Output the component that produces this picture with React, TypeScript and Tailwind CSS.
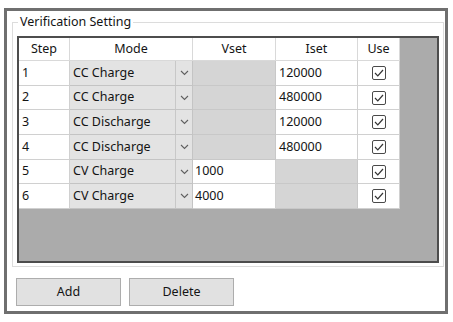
import React from 'react';

type Row = {
  step: number;
  mode: string;
  vset: string | null;
  iset: string | null;
};

const rows: Row[] = [
  { step: 1, mode: 'CC Charge', vset: null, iset: '120000' },
  { step: 2, mode: 'CC Charge', vset: null, iset: '480000' },
  { step: 3, mode: 'CC Discharge', vset: null, iset: '120000' },
  { step: 4, mode: 'CC Discharge', vset: null, iset: '480000' },
  { step: 5, mode: 'CV Charge', vset: '1000', iset: null },
  { step: 6, mode: 'CV Charge', vset: '4000', iset: null },
];

const rowHeights = ['h-[25px]', 'h-[24px]', 'h-[25px]', 'h-[25px]', 'h-[24px]', 'h-[25px]'];

function Chevron() {
  return (
    <svg width="9" height="6" viewBox="0 0 9 6" fill="none">
      <path d="M1 1l3.5 3.5L8 1" stroke="#606060" strokeWidth="1.1" />
    </svg>
  );
}

function CheckBox() {
  return (
    <svg width="14" height="14" viewBox="0 0 14 14" fill="none">
      <rect x="0.5" y="0.5" width="13" height="13" rx="1.5" fill="#fff" stroke="#4a4a4a" />
      <path d="M3 7l2.8 2.8 5.2-5.8" stroke="#333" strokeWidth="1.2" />
    </svg>
  );
}

export default function App() {
  return (
    <div className="w-[453px] h-[322px] bg-white pt-2 pl-1 text-[12.5px] text-[#141414] font-['Noto_Sans',sans-serif]">
      <div className="w-[444px] h-[306px] border-[3px] border-[#6f6f6f] flex flex-col">
        {/* group box */}
        <fieldset className="ml-[5px] mt-[3px] w-[432px] h-[253px] border border-[#dcdcdc] pl-[4px] pt-0 pb-0">
          <legend className="ml-[1px] px-[2px] leading-[16px]">Verification Setting</legend>
          <div className="mt-[6px] w-[422px] h-[227px] border-2 border-[#4d4d4d] bg-[#ababab] flex flex-col">
            <div className="flex h-[23px]">
              <div className="w-[51px] border-r border-b border-[#d9d9d9] bg-white flex items-center justify-center">Step</div>
              <div className="w-[123px] border-r border-b border-[#d9d9d9] bg-white flex items-center justify-center">Mode</div>
              <div className="w-[83px] border-r border-b border-[#d9d9d9] bg-white flex items-center justify-center">Vset</div>
              <div className="w-[82px] border-r border-b border-[#d9d9d9] bg-white flex items-center justify-center">Iset</div>
              <div className="w-[42px] border-r border-b border-[#d9d9d9] bg-white flex items-center justify-center">Use</div>
            </div>
            {rows.map((r, i) => (
              <div key={r.step} className={`flex ${rowHeights[i]}`}>
                <div className="w-[51px] border-r border-b border-[#d0d0d0] bg-white flex items-center pl-[3px]">{r.step}</div>
                <div className="w-[123px] border-r border-b border-[#c4c4c4] bg-[#e3e3e3] flex">
                  <div className="w-[106px] border-r border-[#c8c8c8] flex items-center pl-[3px]">{r.mode}</div>
                  <div className="flex-1 flex items-center justify-center">
                    <Chevron />
                  </div>
                </div>
                {r.vset ? (
                  <div className="w-[83px] border-r border-b border-[#d0d0d0] bg-white flex items-center pl-[2px]">{r.vset}</div>
                ) : (
                  <div className="w-[83px] border-r border-b border-[#c8c8c8] bg-[#d5d5d5]" />
                )}
                {r.iset ? (
                  <div className="w-[82px] border-r border-b border-[#d0d0d0] bg-white flex items-center pl-[3px]">{r.iset}</div>
                ) : (
                  <div className="w-[82px] border-r border-b border-[#c8c8c8] bg-[#d5d5d5]" />
                )}
                <div className="w-[42px] border-r border-b border-[#d0d0d0] bg-white flex items-center justify-center">
                  <CheckBox />
                </div>
              </div>
            ))}
          </div>
        </fieldset>
        {/* buttons */}
        <div className="flex gap-[8px] ml-[9px] mt-[11px]">
          <button className="w-[105px] h-[28px] bg-[#e1e1e1] border border-[#adadad] flex items-center justify-center">Add</button>
          <button className="w-[105px] h-[28px] bg-[#e1e1e1] border border-[#adadad] flex items-center justify-center">Delete</button>
        </div>
      </div>
    </div>
  );
}
